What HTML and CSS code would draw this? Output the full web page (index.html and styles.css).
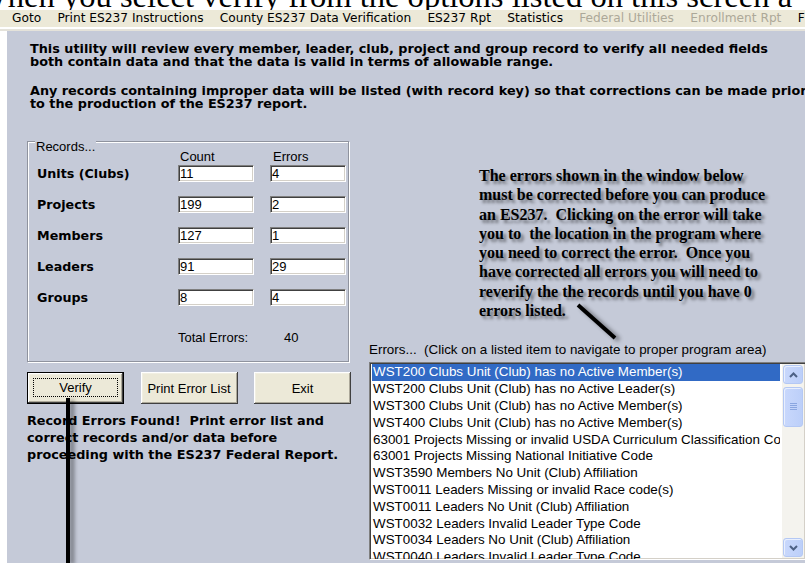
FILE: index.html
```html
<!DOCTYPE html>
<html lang="en">
<head>
<meta charset="utf-8">
<title>County ES237 Data Verification</title>
<link rel="stylesheet" href="styles.css">
</head>
<body>
<div class="caption"><span>When you select verify from the options listed on this screen a</span></div>

<nav class="menubar">
  <span>Goto</span>
  <span>Print ES237 Instructions</span>
  <span>County ES237 Data Verification</span>
  <span>ES237 Rpt</span>
  <span>Statistics</span>
  <span class="off">Federal Utilities</span>
  <span class="off">Enrollment Rpt</span>
  <span>F</span>
</nav>
<div class="menu-rule"></div>

<main class="panel">
  <p class="intro">This utility will review every member, leader, club, project and group record to verify all needed fields<br>both contain data and that the data is valid in terms of allowable range.</p>
  <p class="intro second">Any records containing improper data will be listed (with record key) so that corrections can be made prior<br>to the production of the ES237 report.</p>

  <div class="work">
    <section class="left">
      <div class="groupbox">
        <div class="rec-row head">
          <span class="legend">Records...</span>
          <span>Count</span>
          <span>Errors</span>
        </div>
        <div class="rec-row"><b>Units (Clubs)</b><span class="field">11</span><span class="field">4</span></div>
        <div class="rec-row"><b>Projects</b><span class="field">199</span><span class="field">2</span></div>
        <div class="rec-row"><b>Members</b><span class="field">127</span><span class="field">1</span></div>
        <div class="rec-row"><b>Leaders</b><span class="field">91</span><span class="field">29</span></div>
        <div class="rec-row"><b>Groups</b><span class="field">8</span><span class="field">4</span></div>
        <div class="rec-row total"><span></span><span>Total Errors:</span><span class="total-val">40</span></div>
      </div>

      <div class="buttons">
        <button class="btn default"><span class="focus">Verify</span></button>
        <button class="btn">Print Error List</button>
        <button class="btn">Exit</button>
      </div>

      <p class="status">Record Errors Found!&nbsp; Print error list and<br>correct records and/or data before<br>proceeding with the ES237 Federal Report.</p>
    </section>

    <section class="right">
      <p class="note">The errors shown in the window below<br>must be corrected before you can produce<br>an ES237.&nbsp; Clicking on the error will take<br>you to&nbsp; the location in the program where<br>you need to correct the error.&nbsp; Once you<br>have corrected all errors you will need to<br>reverify the the records until you have 0<br>errors listed.</p>

      <div class="err-label">Errors...&nbsp; (Click on a listed item to navigate to proper program area)</div>

      <div class="listbox">
        <ul class="items">
          <li class="sel">WST200 Clubs Unit (Club) has no Active Member(s)</li>
          <li>WST200 Clubs Unit (Club) has no Active Leader(s)</li>
          <li>WST300 Clubs Unit (Club) has no Active Member(s)</li>
          <li>WST400 Clubs Unit (Club) has no Active Member(s)</li>
          <li>63001 Projects Missing or invalid USDA Curriculum Classification Code</li>
          <li>63001 Projects Missing National Initiative Code</li>
          <li>WST3590 Members No Unit (Club) Affiliation</li>
          <li>WST0011 Leaders Missing or invalid Race code(s)</li>
          <li>WST0011 Leaders No Unit (Club) Affiliation</li>
          <li>WST0032 Leaders Invalid Leader Type Code</li>
          <li>WST0034 Leaders No Unit (Club) Affiliation</li>
          <li>WST0040 Leaders Invalid Leader Type Code</li>
        </ul>
        <div class="scrollbar">
          <div class="sb-btn">
            <svg width="9" height="6" viewBox="0 0 9 6"><path d="M1 5 L4.5 1.5 L8 5" fill="none" stroke="#4d6185" stroke-width="2"/></svg>
          </div>
          <div class="sb-thumb">
            <svg width="7" height="8" viewBox="0 0 7 8"><path d="M0 0.5H7M0 2.5H7M0 4.5H7M0 6.5H7" stroke="#8aa6e0" stroke-width="1"/></svg>
          </div>
          <div class="sb-track"></div>
          <div class="sb-btn">
            <svg width="9" height="6" viewBox="0 0 9 6"><path d="M1 1 L4.5 4.5 L8 1" fill="none" stroke="#4d6185" stroke-width="2"/></svg>
          </div>
        </div>
      </div>
    </section>
  </div>
</main>

<svg class="callouts" width="805" height="563" viewBox="0 0 805 563">
  <line x1="578" y1="305" x2="615" y2="338"/>
  <line x1="68" y1="398" x2="68" y2="570"/>
</svg>
</body>
</html>
```
FILE: styles.css
```css
* { box-sizing: border-box; }

body {
  margin: 0;
  width: 805px;
  height: 563px;
  overflow: hidden;
  position: relative;
  background: #fff;
  color: #000;
  font-family: "DejaVu Sans", sans-serif;
}

/* document text running above the window */
.caption {
  height: 10px;
  overflow: hidden;
}
.caption span {
  display: block;
  margin: -20px 0 0 -23px;
  font: 32.6px/32.6px "Liberation Serif", serif;
  white-space: nowrap;
}

/* menu bar */
.menubar {
  height: 17px;
  display: flex;
  gap: 16.3px;
  padding-left: 12px;
  background: #ece9d8;
  font-size: 12.2px;
  line-height: 17px;
  white-space: nowrap;
  overflow: hidden;
}
.menubar .off { color: #aca899; }
.menu-rule {
  height: 4px;
  background: linear-gradient(#fff 0 2px, #e4e2da 2px);
}

/* form body */
.panel {
  margin-left: 7px;
  height: 532px;
  padding: 11px 0 0 20px;
  background: #c5cad8;
}

.intro {
  margin: 0 0 0 3px;
  font-weight: bold;
  font-size: 12.8px;
  line-height: 13px;
  white-space: nowrap;
}
.intro.second { margin-top: 16px; }

.work {
  display: flex;
  gap: 18px;
  margin-top: 31px;
}

.left { width: 324px; flex: none; }
.right { width: 437px; flex: none; }

/* Records group box */
.groupbox {
  width: 322px;
  height: 221px;
  padding: 8px 0 0 9px;
  border: 1px solid #8f939e;
  box-shadow: 1px 1px 0 #fff, inset 1px 1px 0 #fff;
  font-family: "Liberation Sans", sans-serif;
  font-size: 13px;
}
.rec-row {
  display: grid;
  grid-template-columns: 125px 76px 76px;
  column-gap: 16px;
  height: 17px;
  line-height: 17px;
}
.rec-row + .rec-row { margin-top: 14px; }
.rec-row.head {
  height: 14px;
  line-height: 14px;
  padding-left: 2px;
}
.rec-row.head + .rec-row { margin-top: 1px; }
.rec-row.head span:nth-child(3) { padding-left: 1px; }
.legend {
  justify-self: start;
  margin: -10px 0 0 -4px;
  padding: 0 1px;
  background: #c5cad8;
}
.rec-row b {
  font-family: "DejaVu Sans", sans-serif;
  font-size: 12.7px;
}
.rec-row.total {
  margin-top: 25px;
  height: 14px;
  line-height: 14px;
}
.total-val { padding-left: 14px; }

.field {
  height: 17px;
  padding: 1px 0 0 1px;
  line-height: 13px;
  background: #fff;
  border: 1px solid;
  border-color: #7f7f7f #fff #fff #7f7f7f;
  box-shadow: inset 1px 1px 0 #404040, inset -1px -1px 0 #d4d0c8;
}

/* buttons */
.buttons {
  display: flex;
  justify-content: space-between;
  margin-top: 10px;
}
.btn {
  width: 97px;
  height: 32px;
  padding: 0;
  border: none;
  background: #ece9d8;
  font-family: "Liberation Sans", sans-serif;
  font-size: 13px;
  color: #000;
  box-shadow: inset -1px -1px 0 #404040, inset 1px 1px 0 #fff,
              inset -2px -2px 0 #aca899, inset 2px 2px 0 #f1efe2;
}
.btn.default {
  border: 1px solid #000;
  display: flex;
  padding: 5px 5px 6px;
}
.focus {
  flex: 1;
  display: flex;
  align-items: center;
  justify-content: center;
  border: 1px dotted #000;
}

.status {
  margin: 8px 0 0;
  font-weight: bold;
  font-size: 12.8px;
  line-height: 17px;
  white-space: nowrap;
}

/* annotation */
.note {
  margin: 25px 0 0 110px;
  font: bold 16px/19.3px "Liberation Serif", serif;
  white-space: nowrap;
  text-shadow: 3px 3px 3px rgba(0, 0, 0, 0.45);
}

.err-label {
  margin-top: 22px;
  font-family: "Liberation Sans", sans-serif;
  font-size: 13.4px;
  line-height: 15px;
  white-space: nowrap;
}

/* error list box */
.listbox {
  margin-top: 5px;
  height: 198px;
  display: flex;
  background: #fff;
  border: 1px solid;
  border-color: #7f7f7f #fff #fff #7f7f7f;
  box-shadow: inset 1px 1px 0 #404040, inset -1px -1px 0 #d4d0c8;
  padding: 1px;
  overflow: hidden;
}
.items {
  flex: 1;
  min-width: 0;
  margin: 0;
  padding: 0 2px 0 1px;
  list-style: none;
  font-family: "Liberation Sans", sans-serif;
  font-size: 13.4px;
  line-height: 16.8px;
}
.items li {
  padding-left: 1px;
  white-space: nowrap;
  overflow: hidden;
}
.items li.sel {
  background: #316ac5;
  color: #fff;
}

.scrollbar {
  width: 22px;
  flex: none;
  display: flex;
  flex-direction: column;
  background: #f4f3ee;
}
.sb-btn, .sb-thumb {
  margin: 1px;
  border: 1px solid #b4c8f4;
  border-radius: 3px;
  background: linear-gradient(90deg, #c9d8fc, #bccff9);
  box-shadow: inset 1px 1px 0 #e8effe;
  display: flex;
  align-items: center;
  justify-content: center;
}
.sb-btn { height: 19px; }
.sb-thumb { height: 40px; margin-top: 2px; }
.sb-track { flex: 1; }

/* callout lines drawn over the form */
.callouts {
  position: absolute;
  left: 0;
  top: 0;
  pointer-events: none;
  filter: drop-shadow(4px 2px 2px rgba(0, 0, 0, 0.45));
}
.callouts line {
  stroke: #000;
  stroke-width: 4;
}
```
